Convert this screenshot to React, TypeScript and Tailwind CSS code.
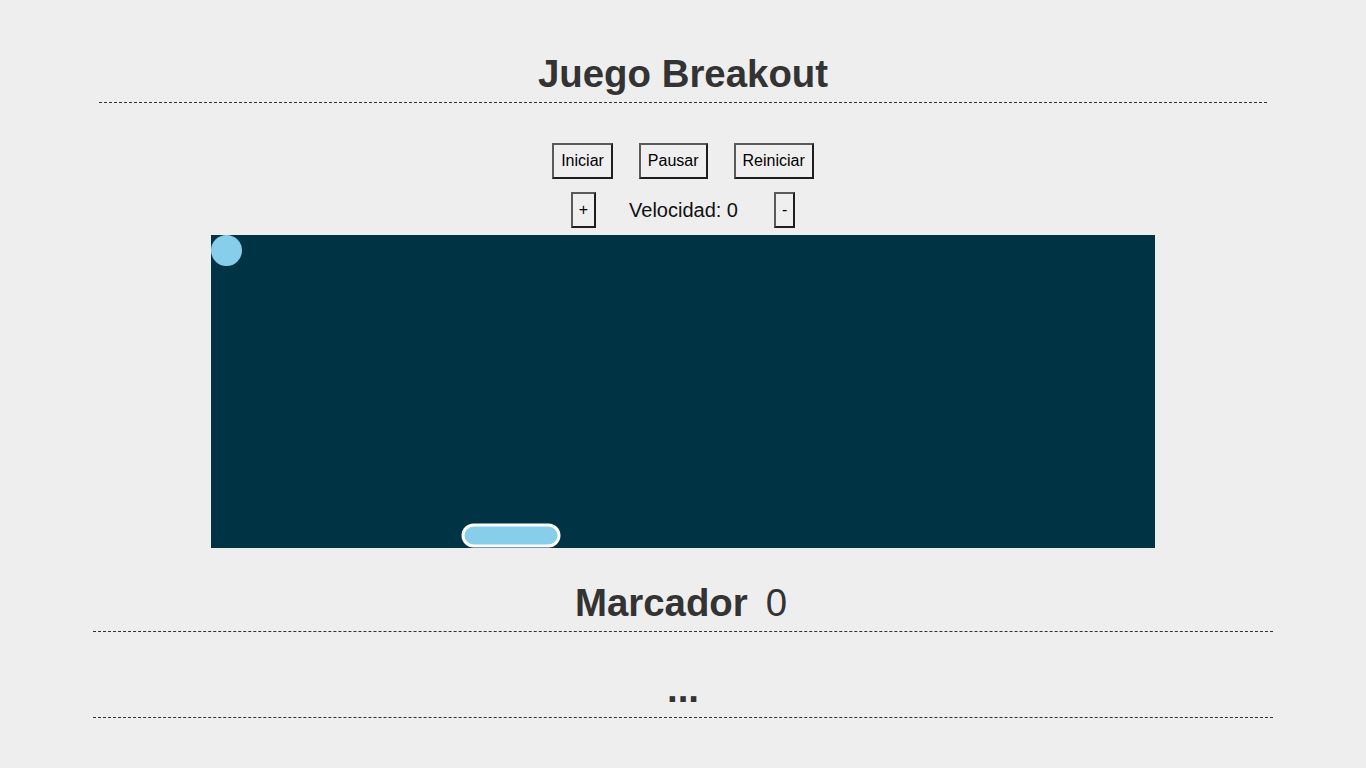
import React from "react";

const btn =
  "h-[36px] px-[7px] bg-[#efefef] text-[16px] text-black border-2 border-t-[#5a5a5a] border-l-[#5a5a5a] border-r-[#1e1e1e] border-b-[#1e1e1e]";

const small =
  "h-[36px] px-[6px] bg-[#efefef] text-[16px] text-black border-2 border-t-[#5a5a5a] border-l-[#5a5a5a] border-r-[#1e1e1e] border-b-[#1e1e1e]";

export default function App() {
  return (
    <div
      className="min-h-screen bg-[#eeeeee] pt-[52px] text-[#333333]"
      style={{ fontFamily: '"Liberation Sans", Arial, sans-serif' }}
    >
      <h1 className="w-[1168px] mx-auto text-center font-bold text-[38.4px] leading-[44px] pb-[6px] border-b border-dashed border-[#333333]">
        Juego Breakout
      </h1>

      <div className="mt-[40px] flex justify-center gap-[26px]">
        <button className={btn}>Iniciar</button>
        <button className={btn}>Pausar</button>
        <button className={btn}>Reiniciar</button>
      </div>

      <div className="mt-[13px] flex justify-center items-center">
        <button className={small}>+</button>
        <span className="ml-[33px] mr-[36px] text-[20px] text-[#111111]">Velocidad: 0</span>
        <button className={small}>-</button>
      </div>

      <div className="mt-[7px] flex justify-center">
        <svg width="944" height="313" viewBox="0 0 944 313" className="block bg-[#003344]">
          <circle cx="15.5" cy="15.5" r="15.5" fill="#87ceeb" />
          <rect x="252" y="290" width="96" height="21" rx="10.5" fill="#87ceeb" stroke="#ffffff" strokeWidth="3" />
        </svg>
      </div>

      <div className="mt-[33px] w-[1180px] mx-auto flex justify-center items-baseline gap-[18px] pr-[4px] text-[38.4px] leading-[44px] pb-[6px] border-b border-dashed border-[#333333]">
        <span className="font-bold">Marcador</span>
        <span>0</span>
      </div>

      <div className="mt-[35px] w-[1180px] mx-auto text-center font-bold text-[38.4px] leading-[44px] pb-[6px] border-b border-dashed border-[#333333]">
        ...
      </div>
    </div>
  );
}
